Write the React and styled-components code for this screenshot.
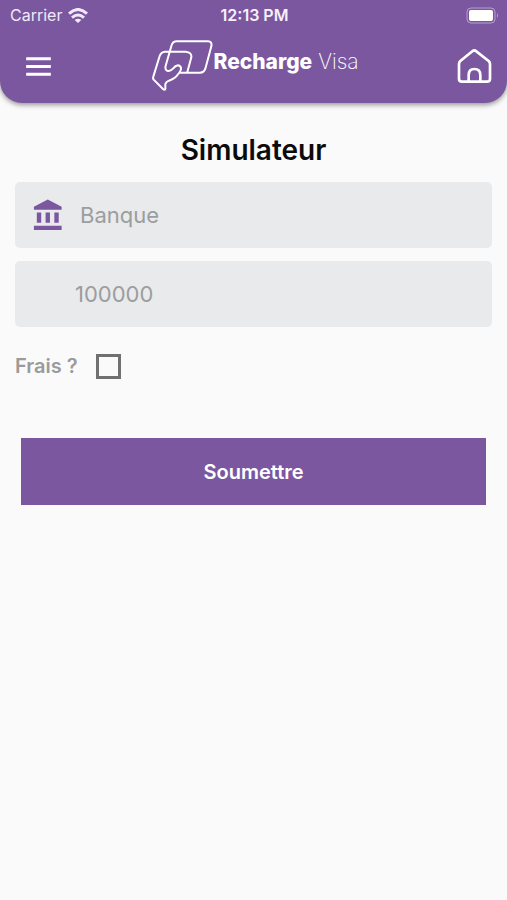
import React, { useState } from 'react';
import styled, { createGlobalStyle } from 'styled-components';

const PURPLE = '#7b57a0';

const GlobalStyle = createGlobalStyle`
  * {
    box-sizing: border-box;
  }

  body {
    margin: 0;
    background-color: #fafafa;
    font-family: Inter, 'Liberation Sans', sans-serif;
  }
`;

const Header = styled.header`
  padding-bottom: 1px;
  background-color: ${PURPLE};
  color: #fff;
  border-radius: 0 0 22px 22px;
  box-shadow: 0 2px 5px rgba(0, 0, 0, 0.4);
`;

const StatusBar = styled.div`
  display: grid;
  grid-template-columns: 1fr auto 1fr;
  align-items: center;
  height: 30px;
  padding: 0 8px 0 10px;
  font-size: 16px;
  line-height: 20px;
`;

const Carrier = styled.span`
  display: flex;
  align-items: center;
  gap: 6px;
  color: #f1e9f8;
`;

const Clock = styled.span`
  font-weight: 600;
  color: #f6f0fb;
`;

const BatteryIcon = styled.svg`
  justify-self: end;
`;

const NavBar = styled.nav`
  display: grid;
  grid-template-columns: 1fr auto 1fr;
  align-items: center;
  height: 72px;
  padding: 0 14px 0 20px;
`;

const IconButton = styled.button`
  display: flex;
  justify-self: ${(props) => props.$side};
  padding: 0;
  border: none;
  background: none;
  color: #fff;
  cursor: pointer;
`;

const Brand = styled.a`
  display: flex;
  align-items: center;
  padding: 0 2px 2px 0;
  color: #fff;
  font-size: 21px;
  line-height: 24px;
  text-decoration: none;
`;

const BrandText = styled.span`
  padding-bottom: 6px;
  white-space: nowrap;
`;

const BrandStrong = styled.strong`
  font-weight: 800;
`;

const BrandLight = styled.span`
  font-weight: 200;
`;

const Form = styled.form`
  display: flex;
  flex-direction: column;
  padding: 29px 15px;
`;

const Title = styled.h1`
  margin: 0 0 14px;
  color: #0b0b0b;
  font-size: 28px;
  font-weight: 600;
  line-height: 36px;
  text-align: center;
`;

const Field = styled.label`
  display: flex;
  align-items: center;
  height: 66px;
  margin-bottom: 13px;
  padding-left: ${(props) => (props.$withIcon ? '16px' : '60px')};
  gap: 14px;
  border-radius: 5px;
  background-color: #e8eaeb;
`;

const FieldInput = styled.input`
  flex: 1;
  min-width: 0;
  height: 100%;
  padding: 0;
  border: none;
  outline: none;
  background: none;
  color: #333;
  font-family: inherit;
  font-size: 22px;

  &::placeholder {
    color: #9c9d9f;
    opacity: 1;
  }
`;

const CheckRow = styled.label`
  display: flex;
  align-items: center;
  align-self: flex-start;
  gap: 18px;
  height: 26px;
  margin: 13px 0 59px;
  color: #9b9b9b;
  font-size: 20px;
  font-weight: 600;
`;

const Checkbox = styled.input`
  appearance: none;
  width: 25px;
  height: 25px;
  margin: 0;
  border: 3px solid #707070;
  background-color: ${(props) => (props.checked ? PURPLE : 'transparent')};
`;

const SubmitButton = styled.button`
  height: 67px;
  margin: 0 6px;
  border: none;
  background-color: ${PURPLE};
  color: #fff;
  font-family: inherit;
  font-size: 20px;
  font-weight: 600;
  cursor: pointer;
`;

const WifiIcon = () => (
  <svg width='20' height='15' viewBox='0 0 60 45' fill='none' aria-hidden='true'>
    <path d='M3 17Q30 -8 57 17' stroke='currentColor' strokeWidth='9' />
    <path d='M12 29Q30 13 48 29' stroke='currentColor' strokeWidth='9' />
    <path d='M30 45L20 36Q30 28 40 36Z' fill='currentColor' />
  </svg>
);

const Battery = () => (
  <BatteryIcon width='33' height='17' viewBox='0 0 33 17' fill='none' aria-hidden='true'>
    <rect x='1' y='1' width='28' height='15' rx='4' stroke='#b69fce' />
    <rect x='3' y='3' width='24' height='11' rx='2' fill='#fff' />
    <path d='M31 6Q33 8.500 31 11Z' fill='#b69fce' />
  </BatteryIcon>
);

const MenuIcon = () => (
  <svg width='37' height='37' viewBox='0 0 24 24' fill='currentColor' aria-hidden='true'>
    <path d='M4 18h16v-2H4v2zm0-5h16v-2H4v2zm0-7v2h16V6H4z' />
  </svg>
);

const HomeIcon = () => (
  <svg
    width='37'
    height='37'
    viewBox='0 0 111 111'
    fill='none'
    stroke='currentColor'
    strokeWidth='8'
    strokeLinejoin='round'
    aria-hidden='true'
  >
    <path d='M9 48Q9 43 13 39L49 10Q55 5 61 10L98 39Q102 43 102 48V92Q102 101 93 101H18Q9 101 9 92Z' />
    <path d='M38 101V81Q38 63 55 63Q73 63 73 81V101' />
  </svg>
);

// Hand holding a card
const LogoMark = () => (
  <svg
    width='61'
    height='52'
    viewBox='36 28 183 156'
    fill='none'
    stroke='currentColor'
    strokeWidth='6'
    strokeLinecap='round'
    strokeLinejoin='round'
    aria-hidden='true'
  >
    <path d='M118 129H180Q192 129 196 117L214 50Q217 35 204 35H110Q99 35 95 46L77 108Q74 122 84 124Q91 125 99 117Q106 108 114 107Q124 109 123 119Q120 129 106 143Q98 150 87 153Q79 156 76 163V178Q74 182 69 178L41 150Q38 146 40 141L59 79Q63 67 75 66H137Q156 68 154 83L142 127' />
  </svg>
);

const BankIcon = () => (
  <svg width='35' height='35' viewBox='0 0 24 24' fill={PURPLE} aria-hidden='true'>
    <path d='M4 10v7h3v-7H4zm6 0v7h3v-7h-3zM2 22h19v-3H2v3zm14-12v7h3v-7h-3zm-4.500-9L2 6v2h19V6l-9.500-5z' />
  </svg>
);

const App = () => {
  const [bank, setBank] = useState('');
  const [amount, setAmount] = useState('');
  const [fees, setFees] = useState(false);

  return (
    <>
      <GlobalStyle />
      <Header>
        <StatusBar>
          <Carrier>
            Carrier
            <WifiIcon />
          </Carrier>
          <Clock>12:13 PM</Clock>
          <Battery />
        </StatusBar>
        <NavBar>
          <IconButton type='button' aria-label='Menu' $side='start'>
            <MenuIcon />
          </IconButton>
          <Brand href='#'>
            <LogoMark />
            <BrandText>
              <BrandStrong>Recharge</BrandStrong> <BrandLight>Visa</BrandLight>
            </BrandText>
          </Brand>
          <IconButton type='button' aria-label='Accueil' $side='end'>
            <HomeIcon />
          </IconButton>
        </NavBar>
      </Header>
      <Form onSubmit={(e) => e.preventDefault()}>
        <Title>Simulateur</Title>
        <Field $withIcon>
          <BankIcon />
          <FieldInput
            aria-label='Banque'
            placeholder='Banque'
            value={bank}
            onChange={(e) => setBank(e.target.value)}
          />
        </Field>
        <Field>
          <FieldInput
            aria-label='Montant'
            inputMode='numeric'
            placeholder='100000'
            value={amount}
            onChange={(e) => setAmount(e.target.value)}
          />
        </Field>
        <CheckRow>
          Frais ?
          <Checkbox
            type='checkbox'
            checked={fees}
            onChange={(e) => setFees(e.target.checked)}
          />
        </CheckRow>
        <SubmitButton type='submit'>Soumettre</SubmitButton>
      </Form>
    </>
  );
};

export default App;
